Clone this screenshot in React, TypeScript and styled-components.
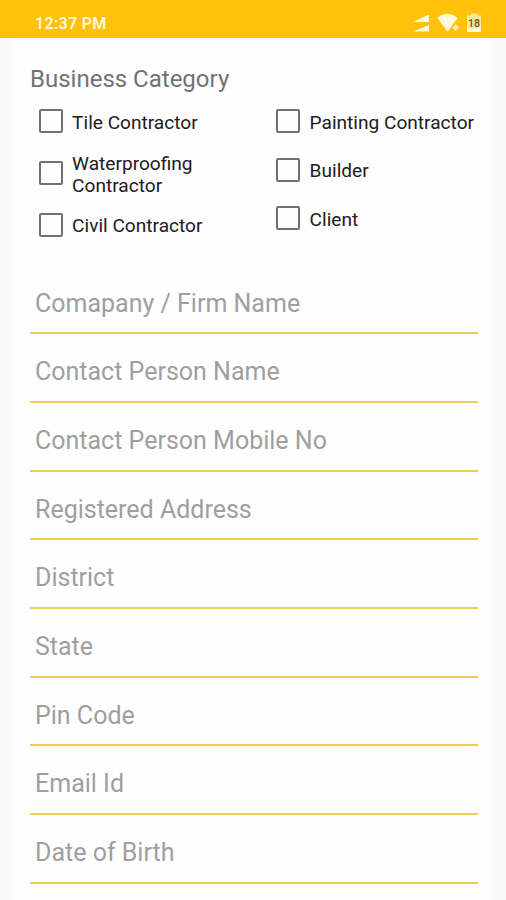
import React from "react";
import styled, { createGlobalStyle } from "styled-components";

const GlobalStyle = createGlobalStyle`
  * { box-sizing: border-box; }
  html, body { margin: 0; padding: 0; background: #fafafa; }
  body { font-family: Roboto, sans-serif; overflow: hidden; }
`;

const Screen = styled.div`
  width: 506px;
  height: 900px;
  overflow: hidden;
  display: flex;
  flex-direction: column;
  background: linear-gradient(90deg, #f9f9f9, #fafafa 10px, #fefefe 18px, #fefefe 488px, #fafafa 494px);
`;

const StatusBar = styled.header`
  flex: none;
  height: 37.5px;
  padding: 8px 24px 0 35px;
  display: flex;
  justify-content: space-between;
  background: #ffc10a;
`;

const Clock = styled.span`
  font-size: 16px;
  line-height: 31px;
  height: 29px;
  font-weight: 600;
  letter-spacing: 0.3px;
  color: #fff8dc;
`;

const StatusIcons = styled.svg`
  display: block;
  width: 70px;
  height: 26px;
`;

const Sheet = styled.main`
  flex: 1;
  padding: 26.5px 28.5px 0 30px;
`;

const Title = styled.h1`
  margin: 0;
  font-size: 24px;
  line-height: 30px;
  font-weight: 400;
  color: #727272;
`;

const Categories = styled.section`
  display: grid;
  grid-template-columns: 237.5px 1fr;
  height: 171.5px;
  padding: 3px 0 0 8.6px;
`;

const Column = styled.div`
  display: flex;
  flex-direction: column;
`;

const Option = styled.label<{ $height: number }>`
  height: ${(p) => p.$height}px;
  display: flex;
  align-items: center;
  gap: 9.5px;
`;

const Box = styled.span`
  flex: none;
  width: 24px;
  height: 24px;
  border: 2px solid #707070;
  border-radius: 2px;
`;

const OptionText = styled.span`
  padding-top: 3px;
  font-size: 19.1px;
  line-height: 22px;
  color: #202020;
  white-space: pre;
`;

const Field = styled.div`
  height: 68.7px;
  padding: 0 5px 14.7px;
  display: flex;
  align-items: flex-end;
  border-bottom: 2px solid #efcd58;
  font-size: 25px;
  line-height: 28px;
  color: #9f9f9f;
`;

const left = [
  { text: "Tile Contractor", height: 48.5 },
  { text: "Waterproofing\nContractor", height: 55 },
  { text: "Civil Contractor", height: 48.5 },
];

const right = [
  { text: "Painting Contractor", height: 48.5 },
  { text: "Builder", height: 48.5 },
  { text: "Client", height: 48.5 },
];

const fields = [
  "Comapany / Firm Name",
  "Contact Person Name",
  "Contact Person Mobile No",
  "Registered Address",
  "District",
  "State",
  "Pin Code",
  "Email Id",
  "Date of Birth",
];

export default function App() {
  return (
    <>
      <GlobalStyle />
      <Screen>
        <StatusBar>
          <Clock>12:37 PM</Clock>
          <StatusIcons viewBox="412 8 70 26" fill="#fff8d9">
            <path d="M413 22 429 14.5V22ZM413 31.5 429 25V31.5Z" />
            <path d="M437.300 18Q447.500 9.500 457.700 18L453.500 23.500Q451.500 25 451.500 27L447.500 31.500Z" />
            <path d="m455.800 24.500 3.300 3.300-3.300 3.300-3.300-3.300Z" fillOpacity="0.85" />
            <path d="M467 15.500h4v-2h6.500v2h3.500v16.500h-14Z" fillOpacity="0.7" />
            <path d="M467 28h14v4h-14Z" />
            <text x="474" y="26.800" textAnchor="middle" fontSize="10.500" fontWeight="600" fill="#705c18">18</text>
          </StatusIcons>
        </StatusBar>
        <Sheet>
          <Title>Business Category</Title>
          <Categories>
            {[left, right].map((items, i) => (
              <Column key={i}>
                {items.map((item) => (
                  <Option key={item.text} $height={item.height}>
                    <Box />
                    <OptionText>{item.text}</OptionText>
                  </Option>
                ))}
              </Column>
            ))}
          </Categories>
          {fields.map((name) => (
            <Field key={name}>{name}</Field>
          ))}
        </Sheet>
      </Screen>
    </>
  );
}
